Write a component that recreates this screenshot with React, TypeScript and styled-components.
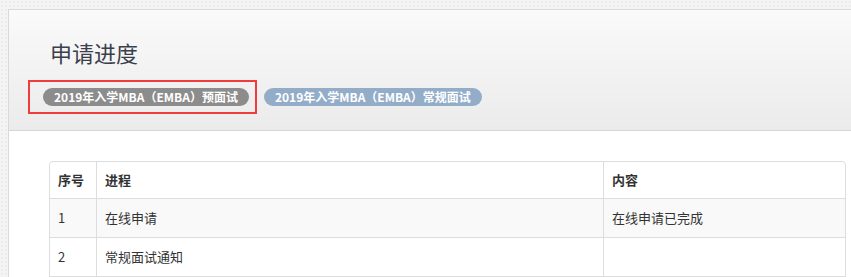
import React from 'react';
import styled, { createGlobalStyle } from 'styled-components';

const Global = createGlobalStyle`
  html, body {
    margin: 0;
    padding: 0;
    overflow: hidden;
  }
  body {
    background-color: #f4f4f4;
    background-image: radial-gradient(#ececec 1px, transparent 1px);
    background-size: 4px 4px;
    font-family: "Microsoft YaHei", "Noto Sans CJK SC", "Open Sans", sans-serif;
    color: #333;
  }
`;

const Page = styled.div`
  padding: 9px 0 0 8px;
`;

const Panel = styled.div`
  width: 900px;
  border: 1px solid #d9d9d9;
  border-right: none;
  background: #fff;
  min-height: 300px;
`;

const Header = styled.div`
  padding: 27px 0 16px 19px;
  background: linear-gradient(to bottom, #fafafa 0%, #ebebeb 100%);
  border-bottom: 1px solid #d6d6d6;
`;

const Title = styled.h2`
  margin: 0 0 0 22px;
  font-size: 22px;
  font-weight: normal;
  line-height: 30px;
  color: #3b3f4c;
`;

const Tabs = styled.div`
  display: flex;
  align-items: center;
  gap: 7px;
  margin-top: 13px;
`;

const Selected = styled.div`
  display: flex;
  align-items: center;
  border: 2px solid #f23c3c;
  padding: 6px 6px 6px 13px;
`;

const Badge = styled.span<{ $color: string }>`
  display: inline-block;
  background: ${(p) => p.$color};
  color: #fff;
  font-size: 12px;
  font-weight: bold;
  line-height: 18px;
  padding: 0 11px;
  border-radius: 9px;
  white-space: nowrap;
`;

const Body = styled.div`
  padding: 30px 40px 0 40px;
`;

const Table = styled.table`
  width: 797px;
  border-collapse: separate;
  border-spacing: 0;
  border: 1px solid #dddddd;
  border-radius: 4px;
  font-size: 13px;
  table-layout: fixed;
`;

const Th = styled.th<{ $w?: number }>`
  box-sizing: border-box;
  width: ${(p) => (p.$w ? `${p.$w}px` : 'auto')};
  text-align: left;
  font-weight: bold;
  padding: 8px 8px;
  line-height: 20px;
  border-left: 1px solid #dddddd;
  &:first-child {
    border-left: none;
  }
`;

const Row = styled.tr<{ $striped?: boolean }>`
  background: ${(p) => (p.$striped ? '#f9f9f9' : '#fff')};
`;

const Td = styled.td`
  padding: 9px 8px;
  line-height: 20px;
  height: 20px;
  border-top: 1px solid #dddddd;
  border-left: 1px solid #dddddd;
  &:first-child {
    border-left: none;
  }
`;

const rows = [
  { no: '1', step: '在线申请', content: '在线申请已完成' },
  { no: '2', step: '常规面试通知', content: '' },
  { no: '', step: '', content: '' },
];

export default function App() {
  return (
    <>
      <Global />
      <Page>
        <Panel>
          <Header>
            <Title>申请进度</Title>
            <Tabs>
              <Selected>
                <Badge $color="#8c8c8c">2019年入学MBA（EMBA）预面试</Badge>
              </Selected>
              <Badge $color="#93adc9">2019年入学MBA（EMBA）常规面试</Badge>
            </Tabs>
          </Header>
          <Body>
            <Table>
              <thead>
                <tr>
                  <Th $w={46}>序号</Th>
                  <Th $w={507}>进程</Th>
                  <Th>内容</Th>
                </tr>
              </thead>
              <tbody>
                {rows.map((r, i) => (
                  <Row key={i} $striped={i % 2 === 0}>
                    <Td>{r.no}</Td>
                    <Td>{r.step}</Td>
                    <Td>{r.content}</Td>
                  </Row>
                ))}
              </tbody>
            </Table>
          </Body>
        </Panel>
      </Page>
    </>
  );
}
